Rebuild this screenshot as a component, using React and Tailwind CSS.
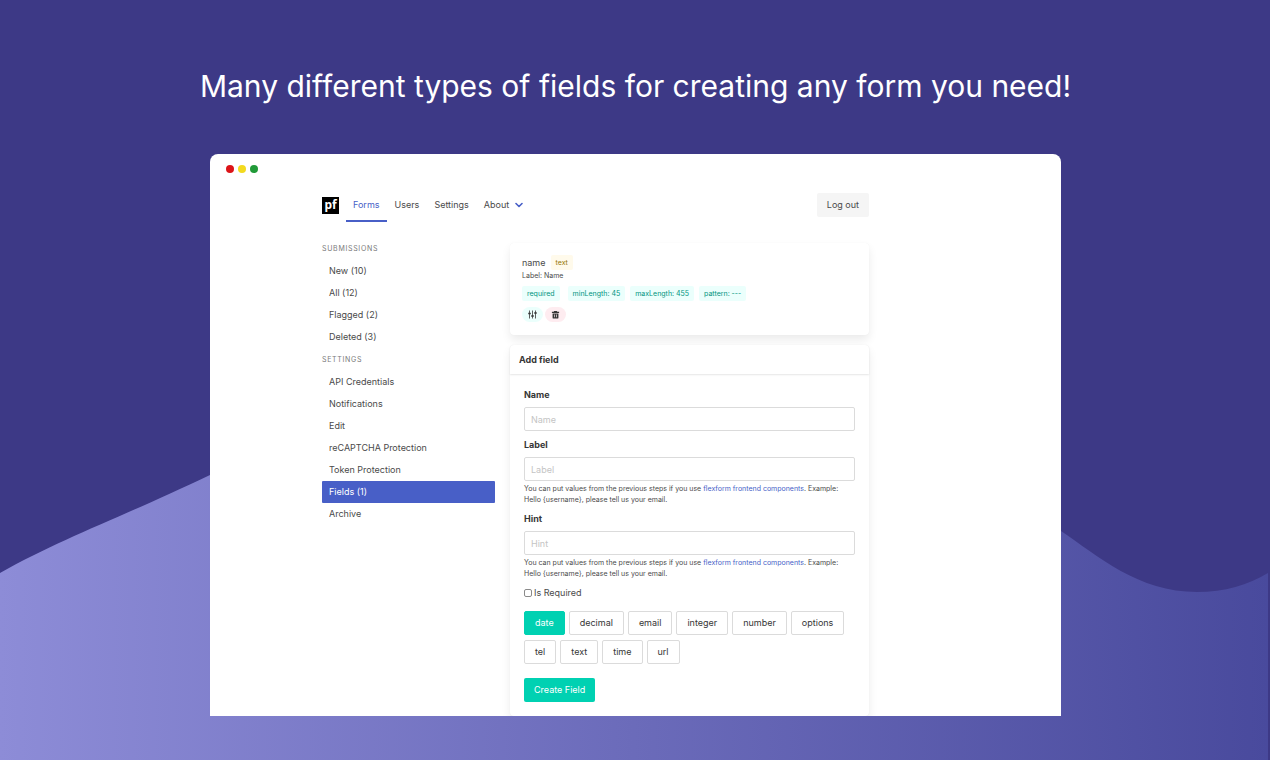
import React, { useState } from 'react';

const submissionLinks = [
  { label: 'New (10)' },
  { label: 'All (12)' },
  { label: 'Flagged (2)' },
  { label: 'Deleted (3)' },
];

const settingLinks = [
  { label: 'API Credentials' },
  { label: 'Notifications' },
  { label: 'Edit' },
  { label: 'reCAPTCHA Protection' },
  { label: 'Token Protection' },
  { label: 'Fields (1)', active: true },
  { label: 'Archive' },
];

const fieldTypes = ['date', 'decimal', 'email', 'integer', 'number', 'options', 'tel', 'text', 'time', 'url'];

const Background = () => (
  <svg
    className="absolute inset-0 w-full h-full"
    viewBox="0 0 1270 760"
    preserveAspectRatio="none"
    aria-hidden="true"
  >
    <defs>
      <linearGradient id="wave" x1="0" y1="0" x2="1" y2="0">
        <stop offset="0" stopColor="#8d8cd7" />
        <stop offset="1" stopColor="#494a9d" />
      </linearGradient>
    </defs>
    <path
      d="M0 573 C62 538 120 518 210 475 C420 375 760 310 1061 531 C1098 556 1138 592 1197 592 C1225 592 1248 585 1268 573 V760 H0 Z"
      fill="url(#wave)"
    />
  </svg>
);

const SlidersIcon = () => (
  <svg className="w-[9px] h-[9px]" viewBox="0 0 18 18" fill="none" stroke="#363636" strokeWidth="1.600" aria-hidden="true">
    <path d="M3 1v16M9 1v16M15 1v16" />
    <path d="M.5 7h5M6.500 12h5M12.500 6h5" strokeWidth="3.400" />
  </svg>
);

const TrashIcon = () => (
  <svg className="w-[9px] h-[9px]" viewBox="0 0 20 20" fill="#363636" aria-hidden="true">
    <path d="M7 2h6l1 2h4v2.500H2V4h4zM3.500 7.500h13V17a2 2 0 0 1-2 2h-9a2 2 0 0 1-2-2zM7 10v6h1.500v-6zM11.500 10v6H13v-6z" fillRule="evenodd" />
  </svg>
);

const MenuSection = ({ title, links }) => (
  <>
    <p className="text-[7px] leading-[12px] mb-[5px] uppercase tracking-widest text-[#7a7a7a]">{title}</p>
    <ul className="mb-1.5">
      {links.map((link) => (
        <li key={link.label}>
          <a
            href="#"
            className={
              link.active
                ? 'block px-[7px] py-1 leading-[14px] rounded-[1px] bg-[#485fc7] text-white'
                : 'block px-[7px] py-1 leading-[14px]'
            }
          >
            {link.label}
          </a>
        </li>
      ))}
    </ul>
  </>
);

const Tag = ({ children }) => (
  <span className="px-[5px] text-[7px] leading-[15px] rounded-[2px] bg-[#ebfffc] text-[#00947e]">{children}</span>
);

const TextField = ({ id, label, help }) => (
  <div className="mb-[7px]">
    <label htmlFor={id} className="block mb-[5px] leading-[14px] font-bold text-[#363636]">
      {label}
    </label>
    <input
      id={id}
      type="text"
      placeholder={label}
      className="block w-full h-6 px-1.5 border border-[#dbdbdb] rounded-[2px] bg-white placeholder:text-[#c4c4c4]"
    />
    {help && (
      <p className="mt-[2px] text-[7px] leading-[11px]">
        You can put values from the previous steps if you use{' '}
        <a href="#" className="text-[#485fc7]">flexform frontend components</a>
        {'. Example: Hello {username}, please tell us your email.'}
      </p>
    )}
  </div>
);

const Navbar = () => (
  <nav className="flex items-center h-[34px]">
    <a
      href="#"
      className="flex items-center justify-center w-[17px] h-[17px] bg-black text-white text-[12px] leading-[16px] font-bold font-['Noto_Sans',sans-serif]"
    >
      pf
    </a>
    <div className="flex gap-px self-stretch ml-[7px]">
      <a href="#" className="flex items-center px-[7px] border-y-2 border-t-transparent border-b-[#485fc7] text-[#485fc7]">
        Forms
      </a>
      <a href="#" className="flex items-center px-[7px]">Users</a>
      <a href="#" className="flex items-center px-[7px]">Settings</a>
      <button type="button" className="flex items-center gap-1.5 px-[7px]">
        About
        <svg className="w-2 h-2" viewBox="0 0 8 8" fill="none" stroke="#485fc7" strokeWidth="1.600" strokeLinecap="round" strokeLinejoin="round">
          <path d="M1 2.500 4 5.500 7 2.500" />
        </svg>
      </button>
    </div>
    <button type="button" className="ml-auto h-6 px-[10px] rounded-[2px] bg-[#f5f5f5]">
      Log out
    </button>
  </nav>
);

const FieldCard = () => (
  <div className="p-3 mb-[10px] rounded-[4px] bg-white shadow-[0_5px_10px_rgba(10,10,10,0.08),0_0_1px_rgba(10,10,10,0.06)]">
    <div className="flex items-center gap-[5px] h-[15px]">
      <span>name</span>
      <span className="px-[5px] text-[7px] leading-[15px] rounded-[2px] bg-[#fffaeb] text-[#947600]">text</span>
    </div>
    <p className="text-[7px] leading-[11px]">Label: Name</p>
    <div className="flex flex-wrap gap-[5px] mt-[5px]">
      <Tag>required</Tag>
      <div className="flex flex-wrap gap-[5px] ml-[3px]">
        <Tag>minLength: 45</Tag>
        <Tag>maxLength: 455</Tag>
        <Tag>pattern: ---</Tag>
      </div>
    </div>
    <div className="flex gap-[2px] mt-1.5 mb-px">
      <button type="button" aria-label="Edit field" className="flex items-center justify-center w-[21px] h-[15px] rounded-full bg-[#ebfffc]">
        <SlidersIcon />
      </button>
      <button type="button" aria-label="Delete field" className="flex items-center justify-center w-[21px] h-[15px] rounded-full bg-[#feecf0]">
        <TrashIcon />
      </button>
    </div>
  </div>
);

const AddFieldCard = () => {
  const [type, setType] = useState('date');

  return (
    <div className="rounded-[4px] bg-white shadow-[0_5px_10px_rgba(10,10,10,0.08),0_0_1px_rgba(10,10,10,0.06)]">
      <h2 className="px-[9px] leading-[29px] rounded-t-[4px] font-bold text-[#363636] shadow-[0_1px_2px_rgba(10,10,10,0.1)]">
        Add field
      </h2>
      <form className="p-[14px]" onSubmit={(e) => e.preventDefault()}>
        <TextField id="name" label="Name" />
        <TextField id="label" label="Label" help />
        <TextField id="hint" label="Hint" help />
        <label className="flex items-center gap-[2px] h-[14px]">
          <input
            type="checkbox"
            className="appearance-none w-2 h-2 border border-[#8a8a8a] rounded-[2px] bg-white checked:bg-[#485fc7]"
          />
          Is Required
        </label>
        <div className="flex flex-wrap gap-x-1 gap-y-[5px] mt-[11px]">
          {fieldTypes.map((item) => (
            <button
              key={item}
              type="button"
              onClick={() => setType(item)}
              className={
                item === type
                  ? 'h-6 px-[10px] border border-[#00d1b2] rounded-[2px] bg-[#00d1b2] text-white'
                  : 'h-6 px-[10px] border border-[#dbdbdb] rounded-[2px] bg-white text-[#363636]'
              }
            >
              {item}
            </button>
          ))}
        </div>
        <button type="submit" className="block h-6 mt-[14px] px-[10px] rounded-[2px] bg-[#00d1b2] text-white">
          Create Field
        </button>
      </form>
    </div>
  );
};

const App = () => {
  return (
    <div className="relative min-h-screen bg-[#3d3986]">
      <Background />

      <div className="relative flex flex-col items-center pb-11 pl-px font-['Inter',sans-serif]">
        <h1 className="pt-16 pb-[46px] text-center text-[30px] leading-[44px] text-white">
          Many different types of fields for creating any form you need!
        </h1>

        {/* Browser window */}
        <div className="w-full max-w-[851px] overflow-hidden rounded-t-lg bg-white text-[9px] text-[#4a4a4a]">
          <div className="flex gap-1 pt-[11px] pl-4">
            <span className="w-2 h-2 rounded-full bg-[#dc1418]" />
            <span className="w-2 h-2 rounded-full bg-[#f3da1f]" />
            <span className="w-2 h-2 rounded-full bg-[#219a38]" />
          </div>

          <div className="pt-[15px] pl-28 pr-48">
            <Navbar />
            <div className="flex gap-[15px] mt-[21px]">
              <aside className="w-[173px] shrink-0">
                <MenuSection title="Submissions" links={submissionLinks} />
                <MenuSection title="Settings" links={settingLinks} />
              </aside>
              <main className="flex-1 min-w-0">
                <FieldCard />
                <AddFieldCard />
              </main>
            </div>
          </div>
        </div>
      </div>
    </div>
  );
};

export default App;
